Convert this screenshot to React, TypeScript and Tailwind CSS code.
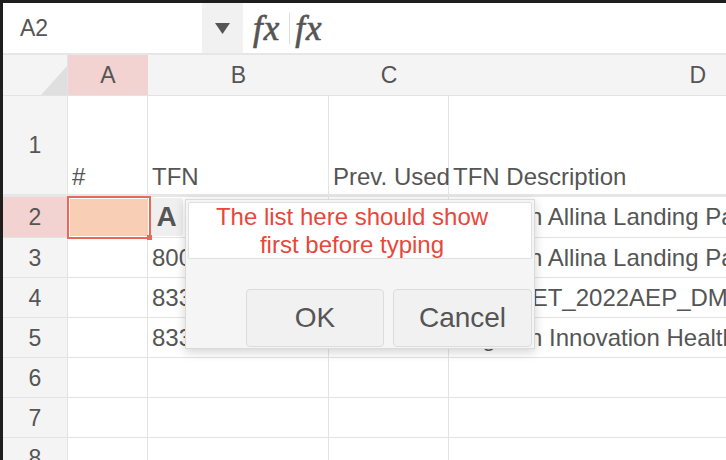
import React from "react";

const sans = "font-['Liberation_Sans',Arial,sans-serif]";

type Row = {
  n: string;
  h: string;
  a?: React.ReactNode;
  b?: React.ReactNode;
  c?: React.ReactNode;
  d?: React.ReactNode;
  active?: boolean;
  header?: boolean;
};

function Cell({
  w,
  children,
  className = "",
}: {
  w: string;
  children?: React.ReactNode;
  className?: string;
}) {
  return (
    <div
      className={`${w} shrink-0 h-full border-r border-[#e3e3e3] flex items-center pl-[4px] whitespace-nowrap relative ${className}`}
    >
      {children}
    </div>
  );
}

export default function App() {
  const rows: Row[] = [
    {
      n: "1",
      h: "h-[101px] border-b-[3px] border-[#e6e6e6]",
      header: true,
      a: "#",
      b: "TFN",
      c: "Prev. Used",
      d: "TFN Description",
    },
    {
      n: "2",
      h: "h-[41px] border-b border-[#e3e3e3]",
      active: true,
      b: (
        <>
          <span className="ml-[-2px] mr-[2px] flex h-[38px] w-[33px] items-center justify-center rounded-[3px] bg-[#efefef] text-[28px] font-bold text-[#555]">
            A
          </span>
          <span>5553019922</span>
        </>
      ),
      d: "Brighton Allina Landing Page",
    },
    {
      n: "3",
      h: "h-[40px] border-b border-[#e3e3e3]",
      b: "8005558841",
      d: "Brighton Allina Landing Page 2",
    },
    {
      n: "4",
      h: "h-[40px] border-b border-[#e3e3e3]",
      b: "8335550172",
      d: "BCS_AET_2022AEP_DMS_TFN",
    },
    {
      n: "5",
      h: "h-[40px] border-b border-[#e3e3e3]",
      b: "8335550926",
      d: "Brighton Innovation Health",
    },
    { n: "6", h: "h-[40px] border-b border-[#e3e3e3]" },
    { n: "7", h: "h-[40px] border-b border-[#e3e3e3]" },
    { n: "8", h: "h-[40px] border-b border-[#e3e3e3]" },
  ];

  return (
    <div
      className={`w-[726px] h-[460px] overflow-hidden bg-[#1e1e1e] pt-[3px] pl-[3px] ${sans} text-[#555]`}
    >
      <div className="relative h-full w-full overflow-hidden bg-white">
        {/* formula bar */}
        <div className="flex h-[52px] border-b-2 border-[#e6e6e6]">
          <div className="flex w-[199px] items-center pl-[17px] text-[23px]">A2</div>
          <div className="flex w-[41px] items-center justify-center bg-[#f1f1f1]">
            <svg width="15" height="11" viewBox="0 0 15 11">
              <path d="M0 0 H15 L7.5 11 Z" fill="#555" />
            </svg>
          </div>
          <div className="ml-[10px] flex items-center font-['Liberation_Serif',serif] text-[35px] italic leading-none text-[#555] [-webkit-text-stroke:0.7px_#555]">
            <span className="tracking-[1px]">fx</span>
            <span className="ml-[9px] mr-[5px] h-[31px] w-px bg-[#dcdcdc] [-webkit-text-stroke:0]" />
            <span className="tracking-[1px]">fx</span>
          </div>
        </div>

        {/* column headers */}
        <div className="flex h-[41px] border-b border-[#e3e3e3] bg-[#f4f4f4] text-[23px]">
          <div className="relative w-[65px] shrink-0 border-r border-[#e3e3e3]">
            <svg className="absolute bottom-0 right-0" width="26" height="29" viewBox="0 0 26 29">
              <path d="M26 0 V29 H0 Z" fill="#dfdfdf" />
            </svg>
          </div>
          <div className="flex w-[80px] shrink-0 items-center justify-center bg-[#f2d3d1]">A</div>
          <div className="flex w-[181px] shrink-0 items-center justify-center">B</div>
          <div className="flex w-[120px] shrink-0 items-center justify-center">C</div>
          <div className="flex flex-1 items-center justify-end pr-[20px]">D</div>
        </div>

        {/* sheet body */}
        <div className="text-[24px] leading-[28px]">
          {rows.map((r) => (
            <div key={r.n} className={`flex ${r.h}`}>
              <div
                className={`flex w-[65px] shrink-0 items-center justify-center border-r border-[#e3e3e3] text-[23px] ${
                  r.active ? "bg-[#f2d3d1]" : "bg-[#f4f4f4]"
                }`}
              >
                {r.n}
              </div>
              <Cell
                w="w-[80px]"
                className={
                  r.header ? "items-end pb-[3px] overflow-hidden" : r.active ? "z-[3]" : "overflow-hidden"
                }
              >
                {r.active ? (
                  <div className="absolute -left-px -top-px h-[43px] w-[84px] border-2 border-[#e8685a] p-px">
                    <div className="h-full w-full bg-[#f8cfb4]" />
                    <div className="absolute -bottom-[3px] -right-[3px] h-[5px] w-[5px] bg-[#e8685a]" />
                  </div>
                ) : (
                  r.a
                )}
              </Cell>
              <Cell w="w-[181px]" className={r.header ? "items-end pb-[3px] overflow-hidden" : "overflow-hidden"}>
                {r.b}
              </Cell>
              <Cell
                w="w-[120px]"
                className={r.header ? "items-end pb-[3px] z-[1]" : "overflow-hidden"}
              >
                {r.c}
              </Cell>
              <div
                className={`flex flex-1 overflow-hidden whitespace-nowrap pl-[4px] ${
                  r.header ? "items-end pb-[3px]" : "items-center"
                }`}
              >
                {r.d}
              </div>
            </div>
          ))}
        </div>

        {/* confirm dialog */}
        <div className="absolute left-[182px] top-[196px] z-20 flex h-[150px] w-[350px] flex-col border border-[#dadada] bg-[#f5f5f5] px-[2px] pt-[2px] shadow-[0_3px_10px_rgba(0,0,0,0.18)]">
          <div className="h-[57px] rounded-[2px] border border-[#e0e0e0] bg-white pr-[16px] text-center text-[24px] leading-[28px] text-[#e8473b]">
            The list here should show
            <br />
            first before typing
          </div>
          <div className="mt-[30px] flex justify-end gap-[9px]">
            <button className="h-[58px] w-[138px] rounded-[4px] border border-[#dcdcdc] bg-[#f1f1f1] text-[28px] text-[#555]">
              OK
            </button>
            <button className="h-[58px] w-[139px] rounded-[4px] border border-[#dcdcdc] bg-[#f1f1f1] text-[28px] text-[#555]">
              Cancel
            </button>
          </div>
        </div>
      </div>
    </div>
  );
}
